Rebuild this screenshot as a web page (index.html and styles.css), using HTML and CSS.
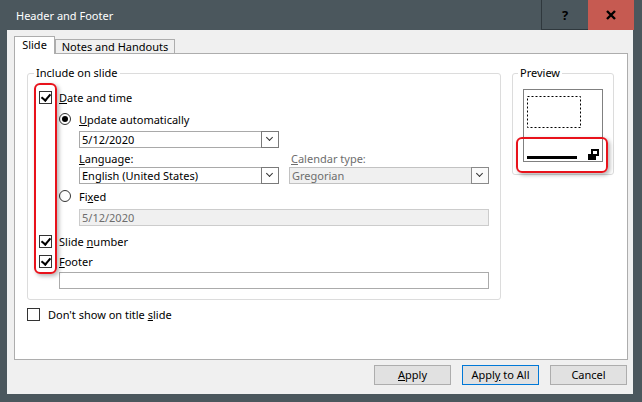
FILE: index.html
```html
<!DOCTYPE html>
<html lang="en">
<head>
  <meta charset="UTF-8" />
  <title>Header and Footer</title>
  <link rel="stylesheet" href="styles.css">
</head>
<body>

  <div class="window">
    <div class="titlebar">
      <span class="title">Header and Footer</span>
      <div class="tb-btn help">?</div>
      <div class="tb-btn close">
        <svg width="12" height="12" viewBox="0 0 12 12"><path d="M2 2 L10 10 M10 2 L2 10" stroke="#000" stroke-width="2.4"/></svg>
      </div>
    </div>

    <div class="client">
      <div class="tabs">
        <div class="tab active">Slide</div>
        <div class="tab">Notes and Handouts</div>
      </div>

      <div class="panel">
        <div class="groups">

          <!-- Include on slide -->
          <fieldset class="group include">
            <legend>Include on slide</legend>
            <div class="inner">
              <div class="row r-date">
                <span class="check on"></span>
                <span><u>D</u>ate and time</span>
              </div>
              <div class="row r-update indent1">
                <span class="radio on"></span>
                <span><u>U</u>pdate automatically</span>
              </div>
              <div class="combo r-datecombo indent2">
                <span class="value">5/12/2020</span>
                <span class="drop"></span>
              </div>
              <div class="lang-grid indent2">
                <div class="field-label"><u>L</u>anguage:</div>
                <div class="field-label disabled"><u>C</u>alendar type:</div>
                <div class="combo">
                  <span class="value">English (United States)</span>
                  <span class="drop"></span>
                </div>
                <div class="combo disabled">
                  <span class="value">Gregorian</span>
                  <span class="drop"></span>
                </div>
              </div>
              <div class="row r-fixed indent1">
                <span class="radio"></span>
                <span>Fi<u>x</u>ed</span>
              </div>
              <div class="textbox disabled r-fixedbox indent2">5/12/2020</div>
              <div class="row r-number">
                <span class="check on"></span>
                <span>Slide <u>n</u>umber</span>
              </div>
              <div class="row r-footer">
                <span class="check on"></span>
                <span><u>F</u>ooter</span>
              </div>
              <div class="textbox r-footerbox indent1"></div>
            </div>
          </fieldset>

          <!-- Preview -->
          <fieldset class="group preview">
            <legend>Preview</legend>
            <svg class="thumb" width="80" height="73" viewBox="0 0 80 73">
              <rect x="0.5" y="0.5" width="79" height="72" fill="#fff" stroke="#808080"/>
              <rect x="4.5" y="7.5" width="53" height="31" fill="none" stroke="#000" stroke-dasharray="2 2"/>
              <rect x="4" y="67" width="50" height="3" fill="#000"/>
              <rect x="69" y="61" width="6" height="5" fill="none" stroke="#000" stroke-width="2"/>
              <rect x="65" y="65" width="8" height="6" fill="#000"/>
            </svg>
          </fieldset>
        </div>

        <div class="row r-titleslide">
          <span class="check"></span>
          <span>Don't show on title <u>s</u>lide</span>
        </div>
      </div>

      <div class="buttons">
        <div class="btn"><u>A</u>pply</div>
        <div class="btn default">Appl<u>y</u> to All</div>
        <div class="btn">Cancel</div>
      </div>
    </div>

    <!-- red callouts drawn over the dialog -->
    <div class="mark mark-checks"></div>
    <div class="mark mark-preview"></div>
  </div>

</body>
</html>
```

FILE: styles.css
```css
* { box-sizing: border-box; margin: 0; padding: 0; }
body { font-family: "Noto Sans", "Liberation Sans", sans-serif; font-size: 11px; color: #000; background: #4b575d; }

.window {
  position: relative;
  width: 642px; height: 402px;
  background: #4b575d;
  display: flex; flex-direction: column;
}

/* title bar */
.titlebar {
  height: 30px; display: flex; align-items: stretch;
  padding-right: 8px;
}
.title {
  flex: 1; color: #fff; font-size: 11px;
  padding-left: 16px; display: flex; align-items: center;
}
.tb-btn {
  display: flex; align-items: center; justify-content: center;
  font-weight: bold; font-size: 13px;
}
.help {
  width: 47px; border-left: 1px solid #2f383d; border-bottom: 1px solid #2f383d;
}
.close { width: 46px; background: #c65a51; }

/* client area */
.client {
  height: 364px; margin: 0 9px 0 7px;
  background: #f0f0f0;
  padding: 7px 5px 0 7px;
  display: flex; flex-direction: column;
}

.tabs { display: flex; align-items: flex-end; height: 16px; }
.tab {
  height: 14px; border: 1px solid #adadad; border-bottom: none;
  background: #f0f0f0; text-align: center; line-height: 13px;
  width: 120px;
}
.tab.active {
  position: relative; z-index: 1;
  width: 41px; height: 18px; margin-bottom: -1px;
  background: #fff; line-height: 16px;
}

.panel {
  height: 307px; background: #fff;
  border: 1px solid #adadad;
  padding: 11px 12px 0 12px;
}

.groups { display: flex; gap: 11px; align-items: flex-start; }

.group {
  border: 1px solid #dcdcdc; border-radius: 3px;
  min-width: 0; padding: 0;
}
.group legend { line-height: 16px; padding: 0 2px; margin-left: 6px; }

.include { width: 474px; }
.include .inner { padding: 0 0 10px 11px; }

.preview { width: 102px; padding: 0 0 12px 10px; }
.preview legend { margin-left: -5px; }
.thumb { display: block; margin-top: 8px; }

/* rows */
.row { display: flex; align-items: center; height: 16px; }
.indent1 { margin-left: 20px; }
.indent2 { margin-left: 40px; }

.check {
  width: 13px; height: 13px; margin-right: 7px;
  border: 1px solid #333; background: #fff; flex: none;
  position: relative;
}
.check.on::after {
  content: ""; position: absolute;
  left: 3px; top: 0px; width: 4px; height: 7px;
  border-right: 2px solid #000; border-bottom: 2px solid #000;
  transform: rotate(40deg);
}
.radio {
  width: 12px; height: 12px; margin-right: 8px;
  border: 1px solid #333; border-radius: 50%; background: #fff;
  flex: none; position: relative;
}
.radio.on::after {
  content: ""; position: absolute; left: 2px; top: 2px;
  width: 6px; height: 6px; border-radius: 50%; background: #000;
}

.r-date { margin-top: 8px; }
.r-update { margin-top: 6px; }
.r-datecombo { margin-top: 4px; width: 200px; }
.lang-grid {
  margin-top: 3px;
  display: grid; grid-template-columns: 200px 200px; column-gap: 10px;
  grid-template-rows: 16px 17px;
}
.field-label { line-height: 16px; }
.field-label.disabled { color: #6d6d6d; padding-left: 2px; }
.r-fixed { margin-top: 4px; }
.r-fixedbox { margin-top: 5px; width: 410px; }
.r-number { margin-top: 7px; }
.r-footer { margin-top: 4px; }
.r-footerbox { margin-top: 3px; width: 430px; height: 19px; }
.r-titleslide { margin-top: 6px; }
.r-titleslide .check { margin-right: 8px; }

/* combo boxes and text boxes */
.combo {
  display: flex; height: 17px;
  border: 1px solid #a9a9a9; background: #fff;
}
.combo .value { flex: 1; padding-left: 2px; line-height: 15px; white-space: nowrap; }
.combo .drop {
  width: 18px; margin: -1px -1px -1px 0;
  border: 1px solid #7a7a7a; background: #fff;
  position: relative;
}
.combo .drop::after {
  content: ""; position: absolute; left: 5px; top: 3px;
  width: 4px; height: 4px;
  border-right: 1.5px solid #333; border-bottom: 1.5px solid #333;
  transform: rotate(45deg);
}
.combo.disabled { background: #f0f0f0; border-color: #c2c2c2; color: #6d6d6d; }
.combo.disabled .drop { background: #fafafa; border-color: #8a8a8a; }

.textbox {
  height: 17px; border: 1px solid #ababab; background: #fff;
  padding-left: 2px; line-height: 15px;
}
.textbox.disabled { background: #f0f0f0; border-color: #cccccc; color: #6d6d6d; }

/* buttons */
.buttons {
  display: flex; justify-content: flex-end; gap: 11px;
  margin-top: 5px; padding-right: 1px;
}
.btn {
  width: 77px; height: 20px;
  border: 1px solid #adadad; background: #e1e1e1;
  text-align: center; line-height: 18px;
}
.btn.default { border-color: #0078d7; }

/* red callouts */
.mark {
  position: absolute;
  border: 2px solid #e8121b; border-radius: 6px;
  box-shadow: 2px 2px 4px rgba(0, 0, 0, 0.3);
}
.mark-checks { left: 34px; top: 83px; width: 23px; height: 191px; }
.mark-preview { left: 516px; top: 137px; width: 92px; height: 36px; }
```
